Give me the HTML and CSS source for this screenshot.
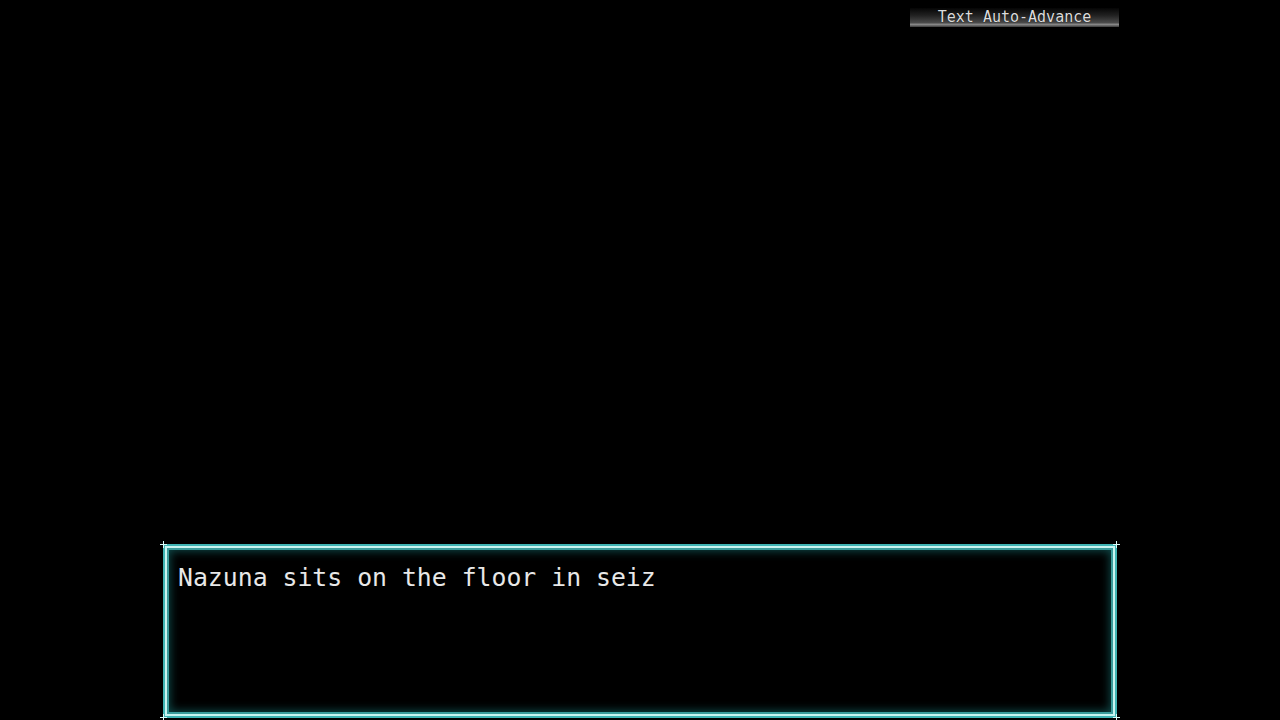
FILE: index.html
```html
<!DOCTYPE html>
<html>
<head>
<meta charset="utf-8">
<link rel="stylesheet" href="styles.css">
</head>
<body>
<div class="screen">
  <div class="topbar">
    <div class="auto-label">Text Auto-Advance</div>
  </div>
  <div class="spacer"></div>
  <div class="msgwin">
    <span class="corner tl"></span>
    <span class="corner tr"></span>
    <span class="corner bl"></span>
    <span class="corner br"></span>
    <div class="msginner">
      <p class="msgtext">Nazuna sits on the floor in seiz</p>
    </div>
  </div>
</div>
</body>
</html>
```
FILE: styles.css
```css
html, body {
  margin: 0;
  padding: 0;
  background: #000;
}
.screen {
  width: 1280px;
  height: 720px;
  display: flex;
  flex-direction: column;
  overflow: hidden;
}
.topbar {
  display: flex;
  justify-content: flex-end;
  padding: 8px 161px 0 0;
}
.auto-label {
  width: 209px;
  height: 19px;
  box-sizing: border-box;
  text-align: center;
  font-family: "DejaVu Sans Mono", monospace;
  font-size: 15px;
  line-height: 19px;
  color: #dcdcdc;
  background: linear-gradient(to bottom, #050505 0%, #222 40%, #4a4a4a 78%, #8a8a8a 86%, #3a3a3a 100%);
  text-shadow: 0 0 1px #000;
}
.spacer {
  flex: 1;
}
.msgwin {
  position: relative;
  margin: 0 0 2px 163px;
  width: 954px;
  height: 174px;
  box-sizing: border-box;
  border: 2px solid #3fb4b4;
}
.msginner {
  height: 100%;
  box-sizing: border-box;
  border: 2px solid #c8f4f0;
  box-shadow: inset 0 0 0 2px #3a9c9c, inset 0 0 10px 3px #0f4a4a;
  padding: 15px 0 0 11px;
}
.msgtext {
  margin: 0;
  font-family: "DejaVu Sans Mono", monospace;
  font-size: 24.8px;
  line-height: 30px;
  color: #e8e8e8;
  letter-spacing: 0;
}
.corner {
  position: absolute;
  width: 7px;
  height: 7px;
}
.corner::before, .corner::after {
  content: "";
  position: absolute;
  background: #d8fbf8;
}
.corner::before {
  left: 3px; top: 0; width: 1px; height: 7px;
}
.corner::after {
  left: 0; top: 3px; width: 7px; height: 1px;
}
.tl { left: -5px; top: -5px; }
.tr { right: -5px; top: -5px; }
.bl { left: -5px; bottom: -5px; }
.br { right: -5px; bottom: -5px; }
```
